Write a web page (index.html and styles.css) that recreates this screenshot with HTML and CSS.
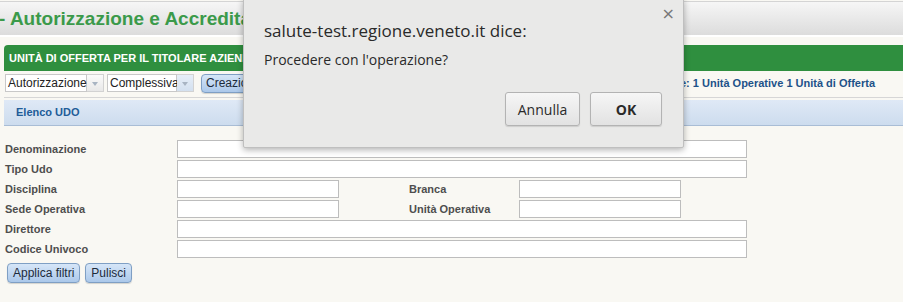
FILE: index.html
```html
<!DOCTYPE html>
<html lang="it">
<head>
  <meta charset="UTF-8" />
  <title>Autorizzazione e Accreditamento</title>
  <link rel="stylesheet" href="styles.css">
</head>
<body>
  <div class="testata">
    <h1>- Autorizzazione e Accreditamento</h1>
  </div>

  <div class="contenuto">
    <div class="barra-verde">UNITÀ DI OFFERTA PER IL TITOLARE AZIENDA ULSS 6 EUGANEA</div>

    <div class="riga-filtri">
      <div class="combo">
        <span class="combo-testo w-aut">Autorizzazione</span>
        <span class="combo-freccia"></span>
      </div>
      <div class="combo">
        <span class="combo-testo w-com">Complessiva</span>
        <span class="combo-freccia attiva"></span>
      </div>
      <button class="btn">Creazione domanda</button>
      <span class="riepilogo">Totale: 1 Unità Operative 1 Unità di Offerta</span>
    </div>

    <div class="barra-blu">Elenco UDO</div>

    <div class="filtri">
      <label>Denominazione</label><input class="largo" type="text">
      <label>Tipo Udo</label><input class="largo" type="text">
      <label>Disciplina</label><input type="text"><label class="lab2">Branca</label><input type="text">
      <label>Sede Operativa</label><input type="text"><label class="lab2">Unità Operativa</label><input type="text">
      <label>Direttore</label><input class="largo" type="text">
      <label>Codice Univoco</label><input class="largo" type="text">
    </div>

    <div class="pulsanti">
      <button class="btn">Applica filtri</button>
      <button class="btn">Pulisci</button>
    </div>
  </div>

  <div class="dialogo">
    <span class="chiudi">×</span>
    <div class="dialogo-titolo">salute-test.regione.veneto.it dice:</div>
    <div class="dialogo-msg">Procedere con l'operazione?</div>
    <div class="dialogo-bottoni">
      <button class="dbtn">Annulla</button>
      <button class="dbtn ok">OK</button>
    </div>
  </div>
</body>
</html>
```

FILE: styles.css
```css
body {
  margin: 0;
  background: #f9f8f3;
  font-family: "Liberation Sans", Arial, sans-serif;
  font-size: 11px;
  color: #444;
  position: relative;
  height: 302px;
  overflow: hidden;
}
.testata {
  margin-top: 1px;
  height: 33px;
  border-top: 1px solid #d4d4d4;
  background: linear-gradient(#f6f6f6, #dcdcdc);
  border-bottom: 2px solid #fff;
}
.testata h1 {
  margin: 0 0 0 -1px;
  font-size: 19px;
  line-height: 33px;
  color: #3b9a4a;
  white-space: nowrap;
}
.contenuto {
  padding: 8px 0 0 4px;
}
.barra-verde {
  background: #2f8f3f;
  color: #fff;
  font-weight: bold;
  height: 26px;
  line-height: 26px;
  padding-left: 5px;
  border-top-left-radius: 4px;
}
.riga-filtri {
  display: flex;
  align-items: center;
  height: 18px;
  margin-top: 3px;
  padding-left: 1px;
  padding-bottom: 5px;
  border-bottom: 1px solid #d6d6d6;
}
.combo {
  display: flex;
  height: 18px;
  margin-right: 3px;
}
.combo-testo {
  border: 1px solid #c8c8c8;
  background: #fff;
  font-size: 12px;
  color: #222;
  line-height: 16px;
  padding-left: 2px;
}
.w-aut { width: 78px; }
.w-com { width: 66px; }
.combo-freccia {
  width: 16px;
  border: 1px solid #d2d2d2;
  border-left: 0;
  background: linear-gradient(#fbfbfb, #e8e8e8);
  position: relative;
}
.combo-freccia.attiva {
  background: linear-gradient(#e6eef8, #d3e0ef);
}
.combo-freccia::after {
  content: "";
  position: absolute;
  left: 5px;
  top: 7px;
  border-left: 3px solid transparent;
  border-right: 3px solid transparent;
  border-top: 4px solid #a8b4c2;
}
.btn {
  font-family: "Liberation Sans", Arial, sans-serif;
  font-size: 12px;
  color: #1c2a3a;
  height: 19px;
  padding: 0 4px;
  border: 1px solid #7f9fc4;
  border-radius: 4px;
  background: linear-gradient(#d6e6f8, #abc8ea);
  box-shadow: 0 1px 1px rgba(0,0,0,.15);
  line-height: 16px;
}
.riga-filtri .btn {
  margin-left: 4px;
}
.riepilogo {
  margin-left: auto;
  margin-right: 28px;
  font-weight: bold;
  color: #1d5289;
}
.barra-blu {
  margin-top: 2px;
  height: 25px;
  line-height: 24px;
  padding-left: 12px;
  background: linear-gradient(#dfe9f6, #cddcee);
  border-bottom: 1px solid #a9bdd5;
  font-weight: bold;
  color: #215c98;
}
.filtri {
  display: grid;
  grid-template-columns: 172px 162px 70px 110px 162px 66px;
  row-gap: 2px;
  margin-top: 14px;
  margin-left: 1px;
}
.filtri label {
  grid-column: 1;
  font-weight: bold;
  color: #4e4e4e;
  align-self: center;
  white-space: nowrap;
}
.filtri .lab2 {
  grid-column: 4;
}
.filtri input {
  width: 100%;
  min-width: 0;
  height: 18px;
  box-sizing: border-box;
  border: 1px solid #bdbdbd;
  background: #fff;
  margin: 0;
  padding: 0 2px;
}
.filtri input.largo {
  grid-column: 2 / span 5;
}
.pulsanti {
  display: flex;
  gap: 5px;
  margin-top: 5px;
  margin-left: 3px;
}
.pulsanti .btn {
  height: 20px;
  padding: 0 5px;
}
.dialogo {
  position: absolute;
  left: 243px;
  top: -2px;
  width: 439px;
  height: 148px;
  background: #e9e9e8;
  border: 1px solid #bfbfbf;
  border-radius: 2px;
  box-shadow: 0 2px 6px rgba(0,0,0,.3);
  font-family: "Open Sans", "Noto Sans", sans-serif;
  color: #2a2a2a;
}
.chiudi {
  position: absolute;
  right: 8px;
  top: 5px;
  font-size: 16px;
  color: #777;
  font-family: "DejaVu Sans", sans-serif;
}
.dialogo-titolo {
  margin: 20px 0 0 20px;
  font-size: 17px;
}
.dialogo-msg {
  margin: 8px 0 0 20px;
  font-size: 14px;
}
.dialogo-bottoni {
  display: flex;
  justify-content: flex-end;
  gap: 10px;
  margin: 23px 21px 0 0;
}
.dbtn {
  font-family: "Open Sans", "Noto Sans", sans-serif;
  font-size: 14px;
  color: #2a2a2a;
  height: 34px;
  min-width: 75px;
  border: 1px solid #b3b3b3;
  border-radius: 3px;
  background: linear-gradient(#f6f6f6, #e2e2e2);
  box-shadow: 0 1px 1px rgba(0,0,0,.12);
}
.dbtn.ok {
  min-width: 72px;
  font-weight: bold;
}
```
